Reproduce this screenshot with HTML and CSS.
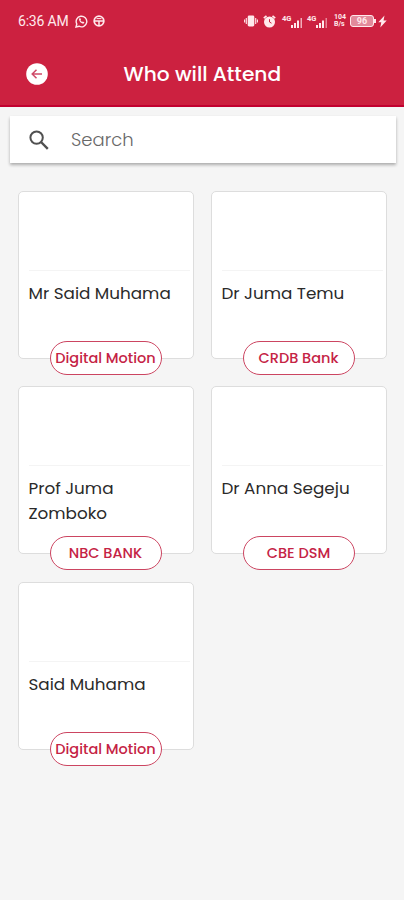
FILE: index.html
```html
<!DOCTYPE html>
<html lang="en">
<head>
<meta charset="utf-8">
<meta name="viewport" content="width=device-width, initial-scale=1">
<title>Who will Attend</title>
<link rel="stylesheet" href="styles.css">
</head>
<body>
<header class="header">
  <div class="status">
    <span class="time">6:36 AM</span>
    <svg class="whatsapp" width="13" height="13" viewBox="0 0 13 13" fill="none" stroke="currentColor"><path d="M1 12l.8-3A5.3 5.3 0 1 1 4 11.2z" stroke-width="1.4"/><path d="M4.200 3.400c-1 1.600 2.200 5.900 4.600 5.100l.6-1.200-1.600-.9-.8.600-1.500-1.600.5-.8-.8-1.500z" fill="currentColor" stroke="none"/></svg>
    <svg class="globe" width="12" height="12" viewBox="0 0 12 12" fill="none" stroke="currentColor"><circle cx="6" cy="6" r="4.800" stroke-width="1.800"/><path d="M1.500 6h9M6 6v4.500" stroke-width="1.500"/><path d="M3.500 3.600h5" stroke-width="1"/></svg>
    <svg class="vibrate" width="14" height="12" viewBox="0 0 14 12" fill="currentColor"><rect x="3.700" y=".5" width="6.600" height="11" rx="1.400"/><path d="M2.300 3v6M.6 4.500v3M11.700 3v6M13.400 4.500v3" stroke="currentColor" stroke-width="1.100"/></svg>
    <svg class="alarm" width="13" height="13" viewBox="0 0 13 13"><circle cx="6.500" cy="7" r="5.500" fill="currentColor"/><path d="M.8 3.200 3.500.9M12.200 3.200 9.500.9" stroke="currentColor" stroke-width="1.700"/><path d="M6.500 4.200V7l2 1.200" fill="none" stroke="#cc2140" stroke-width="1"/></svg>
    <span class="signal"><span class="gen">4G</span><svg width="12" height="12" viewBox="0 0 12 12" fill="currentColor"><path d="M0 9h2v3H0zM3 7h2v5H3zM6 4.500h2V12H6z"/><path d="M9.500 2h1.500v10H9.500z" opacity=".7"/></svg></span>
    <span class="signal second"><span class="gen">4G</span><svg width="12" height="12" viewBox="0 0 12 12" fill="currentColor"><path d="M0 9h2v3H0zM3 7h2v5H3zM6 4.500h2V12H6z"/><path d="M9.500 2h1.500v10H9.500z" opacity=".5"/></svg></span>
    <span class="speed"><span>104</span><span>B/s</span></span>
    <span class="battery">96</span>
    <svg class="bolt" width="9" height="13" viewBox="0 0 9 13" fill="currentColor"><path d="M6.500.5.300 7.300h3L2.300 12.500 8.700 5.500H5.500z"/></svg>
  </div>
  <div class="bar">
    <svg class="back" width="22" height="22" viewBox="0 0 22 22"><circle cx="11" cy="11" r="10.800" fill="#fff"/><path d="M16 11H6.500M10.500 6.700 6.200 11l4.300 4.300" fill="none" stroke="#cf4a68" stroke-width="1.500"/></svg>
    <h1 class="title">Who will Attend</h1>
  </div>
</header>
<main>
  <label class="search">
    <svg width="20" height="20" viewBox="0 0 20 20" fill="none" stroke="#505050"><circle cx="7.600" cy="7.600" r="6.200" stroke-width="2"/><path d="m12 12 6.800 6.900" stroke-width="2.400"/></svg>
    <span class="placeholder">Search</span>
  </label>
  <section class="grid">
    <article class="card"><div class="photo"></div><p class="name">Mr Said Muhama</p><span class="pill">Digital Motion</span></article>
    <article class="card"><div class="photo"></div><p class="name">Dr Juma Temu</p><span class="pill">CRDB Bank</span></article>
    <article class="card"><div class="photo"></div><p class="name">Prof Juma<br>Zomboko</p><span class="pill">NBC BANK</span></article>
    <article class="card"><div class="photo"></div><p class="name">Dr Anna Segeju</p><span class="pill">CBE DSM</span></article>
    <article class="card"><div class="photo"></div><p class="name">Said Muhama</p><span class="pill">Digital Motion</span></article>
  </section>
</main>
</body>
</html>
```
FILE: styles.css
```css
* { box-sizing: border-box; }
body {
  margin: 0;
  min-height: 900px;
  background: #f5f5f5;
  color: #2a2a2a;
  font-family: Poppins, Inter, sans-serif;
}
svg { display: block; flex: none; }
.header {
  height: 107px;
  background: #cc2140;
  border-bottom: 2px solid #c20030;
  color: #fff;
}
.status {
  display: flex;
  align-items: center;
  height: 42px;
  padding: 0 16px 0 18px;
  color: #ffe9ec;
}
.time { width: 57px; font: 400 14px/20px Roboto, sans-serif; letter-spacing: -.2px; white-space: nowrap; }
.globe { margin-left: 5px; }
.vibrate { margin-left: 139px; }
.alarm { margin-left: 5px; }
.signal { display: flex; width: 21px; margin-left: 6px; align-items: flex-end; height: 13px; }
.second { margin-left: 4px; }
.gen { width: 9px; align-self: flex-start; font: 700 7.5px/8px Roboto, sans-serif; }
.speed { display: flex; flex-direction: column; width: 13px; margin-left: 6px; font: 700 7px/7px Roboto, sans-serif; }
.speed span { height: 7px; }
.battery {
  position: relative;
  width: 24px;
  height: 12px;
  margin-left: 3px;
  border: 1px solid #ffe9ec;
  border-radius: 3px;
  background: #e28a9b;
  font: 700 9px/10px Roboto, sans-serif;
  text-align: center;
}
.battery::after { content: ""; position: absolute; right: -3px; top: 3px; width: 2px; height: 4px; background: #ffe9ec; }
.bolt { margin-left: 4px; }
.bar { display: flex; align-items: center; height: 64px; padding-left: 26px; }
.title { margin: 0 0 0 75.5px; font-size: 20.2px; line-height: 30px; font-weight: 500; white-space: nowrap; }
.search {
  display: flex;
  align-items: center;
  height: 47px;
  margin: 9px 8px 0 10px;
  padding-left: 19px;
  background: #fff;
  box-shadow: 0 2px 3px rgba(0, 0, 0, .3);
}
.placeholder { margin-left: 22px; font-size: 18px; font-weight: 300; color: #686868; }
.grid {
  display: grid;
  grid-template-columns: 176px 176px;
  grid-auto-rows: 168px;
  gap: 27.5px 17px;
  padding: 27.5px 0 0 18px;
}
.card {
  position: relative;
  padding: 0 10px;
  border: 1px solid #ddd;
  border-radius: 5px;
  background: #fff;
}
.photo { height: 79px; margin-right: -7px; border-bottom: 1px solid #f4f4f4; }
.name { margin: 10px 0 0 -.5px; font-size: 16.8px; line-height: 25.4px; white-space: nowrap; }
.pill {
  position: absolute;
  left: 31px;
  bottom: -17px;
  width: 112px;
  height: 34px;
  border: 1px solid #cc4561;
  border-radius: 17px;
  background: #fff;
  color: #c52345;
  font-size: 14.5px;
  font-weight: 500;
  line-height: 32px;
  text-align: center;
  text-indent: -1px;
  white-space: nowrap;
}
```
